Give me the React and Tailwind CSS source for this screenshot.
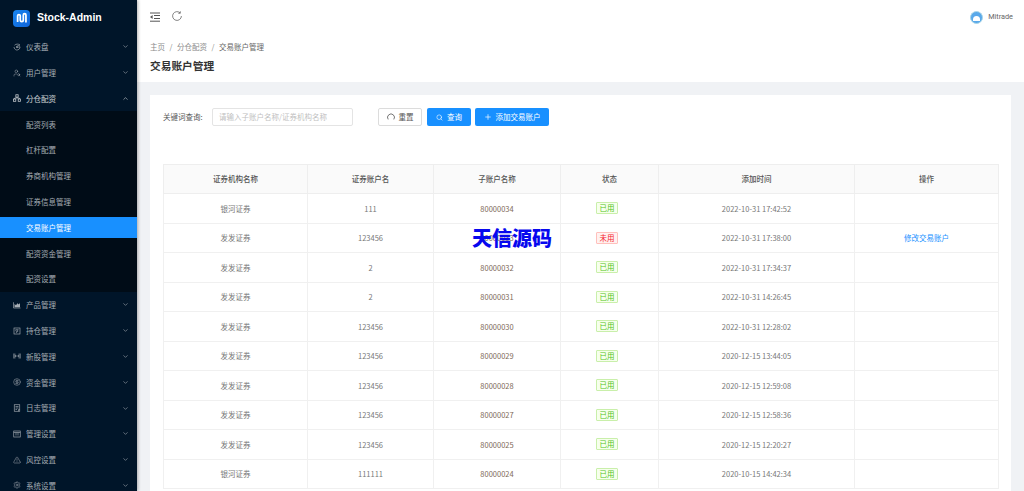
import React from 'react';
import { ChevronDown, ChevronUp, CircleDollarSign, TriangleAlert, Settings, UserSearch, Search, Plus } from 'lucide-react';

// small menu icons that lucide has no close match for
const Svg = ({ className, children }) => (
  <svg viewBox="0 0 16 16" className={className} fill="none" stroke="currentColor" strokeWidth="1.3">
    {children}
  </svg>
);
const DashIcon = (p) => (
  <Svg {...p}>
    <path d="M3 4.5C6 1.5 11 1.5 14 4C12 5 9 5 7.5 7C6.5 8.5 8 9.5 9 9C10.5 8.5 12 7.5 14 7.5C14.5 11 11 14.5 7 14C4.5 13.5 2 11 2 8" />
    <circle cx="8" cy="8" r="1.2" />
  </Svg>
);
const NetIcon = (p) => (
  <Svg {...p}>
    <rect x="5.7" y="1.5" width="4.6" height="4.6" strokeWidth="1.5" />
    <rect x="1" y="10" width="4.6" height="4.6" strokeWidth="1.5" />
    <rect x="10.4" y="10" width="4.6" height="4.6" strokeWidth="1.5" />
    <path d="M3.3 10V8H12.7V10M8 6V8" />
  </Svg>
);
const ChartIcon = (p) => (
  <Svg {...p}>
    <path d="M1 2.5V14H15" />
    <path d="M3 12.5V6L6 8.5L9 4.5L11.5 7L14 4V12.5Z" fill="currentColor" stroke="none" />
  </Svg>
);
const HoldIcon = (p) => (
  <Svg {...p}>
    <rect x="2" y="2" width="12" height="12" />
    <path d="M5.5 5H10.5L8 8H10.5L6.5 11.5L7.5 8H5.5Z" strokeWidth="1" />
  </Svg>
);
const IpoIcon = (p) => (
  <Svg {...p}>
    <path d="M1.5 3V13M3.8 3V13M12.2 3V13M14.5 3V13" />
    <path d="M4 8H12M6 6L4 8L6 10M10 6L12 8L10 10" strokeWidth="1" />
  </Svg>
);
const LogIcon = (p) => (
  <Svg {...p}>
    <rect x="2.5" y="1.5" width="11" height="13" />
    <path d="M5 5H11M5 8H11M5 11H8" />
    <path d="M11 14.5V11H13.5" />
  </Svg>
);
const PanelIcon = (p) => (
  <Svg {...p}>
    <rect x="1.5" y="2" width="13" height="12" />
    <path d="M1.5 5H14.5M6 5V11M10 5V11" />
  </Svg>
);

const menuTop = [
  { name: '仪表盘', icon: DashIcon },
  { name: '用户管理', icon: UserSearch },
];
const subMenu = ['配资列表', '杠杆配置', '券商机构管理', '证券信息管理', '交易账户管理', '配资资金管理', '配资设置'];
const menuBottom = [
  { name: '产品管理', icon: ChartIcon },
  { name: '持仓管理', icon: HoldIcon },
  { name: '新股管理', icon: IpoIcon },
  { name: '资金管理', icon: CircleDollarSign },
  { name: '日志管理', icon: LogIcon },
  { name: '管理设置', icon: PanelIcon },
  { name: '风控设置', icon: TriangleAlert },
  { name: '系统设置', icon: Settings },
];

const rows = [
  ['银河证券', '111', '80000034', true, '2022-10-31 17:42:52', false],
  ['发发证券', '123456', '80000033', false, '2022-10-31 17:38:00', true],
  ['发发证券', '2', '80000032', true, '2022-10-31 17:34:37', false],
  ['发发证券', '2', '80000031', true, '2022-10-31 14:26:45', false],
  ['发发证券', '123456', '80000030', true, '2022-10-31 12:28:02', false],
  ['发发证券', '123456', '80000029', true, '2020-12-15 13:44:05', false],
  ['发发证券', '123456', '80000028', true, '2020-12-15 12:59:08', false],
  ['发发证券', '123456', '80000027', true, '2020-12-15 12:58:36', false],
  ['发发证券', '123456', '80000025', true, '2020-12-15 12:20:27', false],
  ['银河证券', '111111', '80000024', true, '2020-10-15 14:42:34', false],
];

function MenuItem({ item, open }) {
  const Icon = item.icon;
  const Arrow = open ? ChevronUp : ChevronDown;
  return (
    <div className={`h-[25.8px] flex items-center pl-[13px] pr-[8px] text-[7.5px] ${open ? 'text-white/80' : 'text-[#a6adb4]'}`}>
      <Icon className="w-[8px] h-[8px] mr-[5px]" strokeWidth={1.5} />
      <span className="flex-1">{item.name}</span>
      <Arrow className="w-[7px] h-[7px]" strokeWidth={2} />
    </div>
  );
}

export default function App() {
  return (
    <div className="w-[1024px] h-[491px] overflow-hidden flex bg-[#f0f2f5] font-['Noto_Sans_CJK_SC','Liberation_Sans',sans-serif]">

      {/* sidebar */}
      <div className="w-[137px] shrink-0 bg-[#001529] shadow-[1px_0_3px_rgba(0,0,0,0.3)] z-10">
        <div className="h-[34px] flex items-center pl-[13px] pt-[2px]">
          <div className="w-[17px] h-[17px] rounded-[4px] bg-gradient-to-br from-[#1a86f0] to-[#0f62d8] flex items-center justify-center">
            <svg viewBox="0 0 16 16" className="w-[14px] h-[14px]" fill="none" stroke="white" strokeWidth="2">
              <path d="M3 12.5V5.5C3 3.5 6 3.5 6 5.5V10.5C6 12.5 9.5 12.5 9.5 10.5V4.5C9.5 2.5 12.5 2.5 12.5 4.5V13" />
            </svg>
          </div>
          <span className="ml-[7px] text-[10.5px] font-bold text-white font-['Liberation_Sans',sans-serif]">Stock-Admin</span>
        </div>
        <div>
          {menuTop.map((item) => <MenuItem key={item.name} item={item} />)}
          <MenuItem item={{ name: '分仓配资', icon: NetIcon }} open />
          <div className="bg-[#000c17]">
            {subMenu.map((name, i) => (
              <div key={name} className="h-[25.8px] flex items-center">
                <div className={`w-full h-[21.5px] flex items-center pl-[26px] text-[7.5px] ${i === 4 ? 'bg-[#1890ff] text-white' : 'text-[#a6adb4]'}`}>
                  {name}
                </div>
              </div>
            ))}
          </div>
          {menuBottom.map((item) => <MenuItem key={item.name} item={item} />)}
        </div>
      </div>

      {/* main */}
      <div className="flex-1 min-w-0">
        <div className="h-[34px] bg-white flex items-center pl-[13px] pr-[11px] shadow-[0_1px_2px_rgba(0,21,41,0.06)]">
          <svg viewBox="0 0 10 10" className="w-[10px] h-[10px] text-[#555]" fill="none" stroke="currentColor" strokeWidth="1">
            <path d="M0 1H10M4 3.5H10M4 6.5H10M0 9.2H10" />
            <path d="M2.6 3L0 5L2.6 7Z" fill="currentColor" stroke="none" />
          </svg>
          <svg viewBox="0 0 10 10" className="w-[10px] h-[10px] ml-[12px] mb-[2px] text-[#666]" fill="none" stroke="currentColor" strokeWidth="0.8">
            <path d="M8 1.8A4.4 4.4 0 1 0 9.4 5" />
            <path d="M8.3 0.3V2.3H6.3" />
          </svg>
          <div className="ml-auto flex items-center">
            <div className="w-[13px] h-[13px] rounded-full bg-[#5aa9ea] border border-[#a9d6e8] flex items-end justify-center overflow-hidden">
              <div className="w-[7px] h-[5px] mb-[2px] bg-white rounded-t-full" />
            </div>
            <span className="ml-[5px] text-[7.3px] text-[#666] font-['Roboto',sans-serif]">Mitrade</span>
          </div>
        </div>

        <div className="h-[48px] bg-white pl-[13px] pt-[7px]">
          <div className="flex items-center gap-[4.5px] text-[7.5px] text-[#8c8c8c] leading-[11px]">
            <span>主页</span>
            <span>/</span>
            <span>分仓配资</span>
            <span>/</span>
            <span className="text-[#666]">交易账户管理</span>
          </div>
          <h1 className="mt-[7px] text-[10.7px] font-bold leading-[14px] text-[#333]">交易账户管理</h1>
        </div>

        <div className="pt-[13px] px-[13px]">
          <div className="relative bg-white h-[420px] px-[13px]">
            <div className="pt-[13px] flex items-start h-[69px]">
              <span className="text-[7.5px] text-[#555] w-[49px] h-[18px] leading-[18px]">关键词查询:</span>
              <div className="w-[141px] h-[18px] border border-[#e4e4e4] rounded-[2px] pl-[6px] flex items-center text-[7.5px] text-[#bfbfbf]">
                请输入子账户名称/证券机构名称
              </div>
              <button className="ml-[25px] w-[44px] h-[18px] border border-[#dcdcdc] rounded-[2px] bg-white flex items-center justify-center gap-[4px] text-[7.5px] text-[#555]">
                <svg viewBox="0 0 10 10" className="w-[8px] h-[8px]" fill="none" stroke="currentColor" strokeWidth="1">
                  <path d="M1.5 8A4.3 4.3 0 1 1 8.5 8" />
                </svg>
                重置
              </button>
              <button className="ml-[5px] w-[44px] h-[18px] rounded-[2px] bg-[#1890ff] flex items-center justify-center gap-[4px] text-[7.5px] text-white">
                <Search className="w-[7px] h-[7px]" strokeWidth={2} />
                查询
              </button>
              <button className="ml-[4px] w-[74px] h-[18px] rounded-[2px] bg-[#1890ff] flex items-center justify-center gap-[4px] text-[7.5px] text-white">
                <Plus className="w-[8px] h-[8px]" strokeWidth={2} />
                添加交易账户
              </button>
            </div>

            <table className="w-[835px] table-fixed border-collapse text-[7.5px] text-center">
              <colgroup>
                <col className="w-[144px]" />
                <col className="w-[126px]" />
                <col className="w-[127px]" />
                <col className="w-[98px]" />
                <col className="w-[196px]" />
                <col className="w-[144px]" />
              </colgroup>
              <thead>
                <tr className="h-[29px] bg-[#fafafa] text-[#555]">
                  {['证券机构名称', '证券账户名', '子账户名称', '状态', '添加时间', '操作'].map((h) => (
                    <th key={h} className="border border-[#eeeeee] font-medium">{h}</th>
                  ))}
                </tr>
              </thead>
              <tbody className="text-[#777]">
                {rows.map((r) => (
                  <tr key={r[2]} className="h-[29.5px]">
                    <td className="border border-[#f0f0f0]">{r[0]}</td>
                    <td className="border border-[#f0f0f0]">{r[1]}</td>
                    <td className="border border-[#f0f0f0] text-[#806a58]">{r[2]}</td>
                    <td className="border border-[#f0f0f0]">
                      <span className={`inline-block w-[22px] h-[12px] mr-[5px] leading-[10px] border rounded-[1px] ${r[3] ? 'bg-[#f6ffed] border-[#c9efaa] text-[#52c41a]' : 'bg-[#fff1f0] border-[#ffc0bc] text-[#f5222d]'}`}>
                        {r[3] ? '已用' : '未用'}
                      </span>
                    </td>
                    <td className="border border-[#f0f0f0]">{r[4]}</td>
                    <td className="border border-[#f0f0f0] text-[#1890ff]">{r[5] ? '修改交易账户' : ''}</td>
                  </tr>
                ))}
              </tbody>
            </table>

            {/* watermark */}
            <div className="absolute left-[322px] top-[132px] text-[20px] leading-[22px] font-black text-[#0808ee] whitespace-nowrap">
              天信源码
            </div>
          </div>
        </div>
      </div>
    </div>
  );
}
